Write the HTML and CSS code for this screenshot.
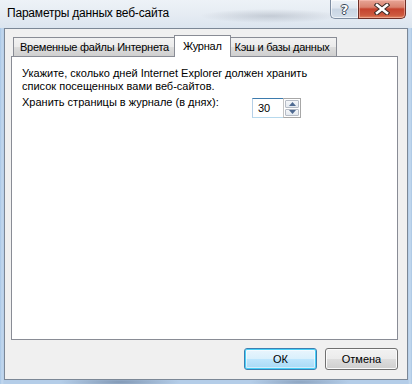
FILE: index.html
```html
<!DOCTYPE html>
<html lang="ru">
<head>
<meta charset="utf-8">
<title>Параметры данных веб-сайта</title>
<link rel="stylesheet" href="styles.css">
</head>
<body>
<div class="window">
  <div class="titlebar">
    <span class="title">Параметры данных веб-сайта</span>
    <div class="caption-buttons">
      <div class="cap help"><span class="qmark">?</span></div>
      <div class="cap close">
        <svg width="16" height="12" viewBox="0 0 16 12">
          <path d="M3 2 L13 10 M13 2 L3 10" stroke="#3b2a26" stroke-width="4.6" stroke-linecap="square" fill="none"/>
          <path d="M3 2 L13 10 M13 2 L3 10" stroke="#ffffff" stroke-width="2.6" stroke-linecap="square" fill="none"/>
        </svg>
      </div>
    </div>
  </div>
  <div class="client">
    <div class="tabs">
      <div class="tab">Временные файлы Интернета</div>
      <div class="tab active">Журнал</div>
      <div class="tab">Кэш и базы данных</div>
    </div>
    <div class="panel">
      <p class="desc">Укажите, сколько дней Internet Explorer должен хранить<br>список посещенных вами веб-сайтов.</p>
      <div class="row">
        <span class="label">Хранить страницы в журнале (в днях):</span>
        <div class="spin">
          <div class="field">30</div>
          <div class="updown">
            <div class="ud-btn"><svg width="7" height="4" viewBox="0 0 7 4"><path d="M0 4 L3.5 0 L7 4 Z" fill="#4f6a91"/></svg></div>
            <div class="ud-btn"><svg width="7" height="4" viewBox="0 0 7 4"><path d="M0 0 L3.5 4 L7 0 Z" fill="#4f6a91"/></svg></div>
          </div>
        </div>
      </div>
    </div>
    <div class="actions">
      <button class="btn default">ОК</button>
      <button class="btn">Отмена</button>
    </div>
  </div>
</div>
</body>
</html>
```
FILE: styles.css
```css
html, body {
  margin: 0;
  padding: 0;
}
body {
  width: 412px;
  height: 384px;
  overflow: hidden;
  font-family: "Liberation Sans", Arial, sans-serif;
  font-size: 11px;
  letter-spacing: -0.25px;
  color: #000;
}
.window {
  width: 412px;
  height: 384px;
  display: flex;
  flex-direction: column;
  background:
    radial-gradient(ellipse 60px 6px at 120px 382px, rgba(70,90,120,0.45), transparent),
    radial-gradient(ellipse 50px 5px at 300px 382px, rgba(70,90,120,0.35), transparent),
    linear-gradient(to right, #a7c6e6 0, #c3d8ee 2px, #b4cde8 4px, #b4cde8 408px, #c5daef 410px, #a9c6e4 412px);
}
.titlebar {
  height: 28px;
  flex: none;
  display: flex;
  justify-content: space-between;
  align-items: flex-start;
  padding: 0 6px 0 7px;
  background:
    radial-gradient(ellipse 70px 7px at 270px 16px, rgba(120,130,145,0.3), transparent),
    linear-gradient(to bottom, #edf2f7 0, #e6ecf3 14px, #dbe5ef 28px);
}
.title {
  margin-top: 6px;
  line-height: 15px;
  font-size: 12px;
  letter-spacing: -0.2px;
  color: #000;
}
.caption-buttons {
  display: flex;
  height: 19px;
}
.cap {
  height: 19px;
  display: flex;
  align-items: center;
  justify-content: center;
  box-sizing: border-box;
}
.help {
  width: 28px;
  border: 1px solid #7f8ea2;
  border-top: none;
  border-right: none;
  border-radius: 0 0 0 5px;
  background: linear-gradient(to bottom, #eef2f7 0, #dfe6ef 45%, #c9d5e3 50%, #d4dfeb 100%);
  box-shadow: inset 0 0 0 1px rgba(255,255,255,0.6);
}
.qmark {
  font-family: "DejaVu Sans", sans-serif;
  font-weight: bold;
  font-size: 13px;
  line-height: 13px;
  letter-spacing: 0;
  color: #fff;
  text-shadow: -1px 0 #3a4656, 1px 0 #3a4656, 0 -1px #3a4656, 0 1px #3a4656;
}
.close {
  width: 48px;
  border: 1px solid #6e2f27;
  border-top: none;
  border-radius: 0 0 5px 0;
  background: linear-gradient(to bottom, #e7a596 0, #d9826f 40%, #c5432e 50%, #cd5a3f 85%, #e08a63 100%);
  box-shadow: inset 0 0 0 1px rgba(255,200,190,0.5);
}
.client {
  flex: 1;
  display: flex;
  flex-direction: column;
  margin: 0 4px 4px 4px;
  background: #f0f0f0;
  border: 1px solid #7b8796;
}
.tabs {
  display: flex;
  align-items: flex-end;
  margin: 6px 0 0 8px;
  height: 21px;
  position: relative;
  z-index: 1;
}
.tab {
  height: 19px;
  box-sizing: border-box;
  padding: 0 6px;
  line-height: 18px;
  border: 1px solid #898c95;
  border-bottom: none;
  background: linear-gradient(to bottom, #f2f2f2 0, #ebebeb 50%, #dddddd 51%, #cfcfcf 100%);
  white-space: nowrap;
  margin-left: -1px;
}
.tab:first-child {
  margin-left: 0;
}
.tab.active {
  height: 22px;
  margin: 0 -2px -1px -2px;
  padding: 0 8px;
  line-height: 20px;
  background: #fff;
  position: relative;
  z-index: 2;
}
.panel {
  flex: 1;
  margin: 0 9px 0 6px;
  background: #fff;
  border: 1px solid #898c95;
  padding: 10px 10px 0 10px;
  letter-spacing: 0;
}
.desc {
  margin: 0;
  line-height: 13px;
}
.row {
  display: flex;
  align-items: flex-start;
  margin-top: 3px;
}
.label {
  width: 230px;
  line-height: 13px;
  flex: none;
}
.spin {
  display: flex;
  margin-top: 2px;
  height: 20px;
}
.field {
  width: 31px;
  box-sizing: border-box;
  height: 20px;
  padding-left: 5px;
  line-height: 18px;
  border: 1px solid #b5cfe7;
  border-top-color: #3d7bad;
  border-bottom-color: #b7d9ed;
  border-right: none;
  background: #fff;
}
.updown {
  width: 18px;
  height: 20px;
  box-sizing: border-box;
  border: 1px solid #a7a7a7;
  border-left-color: #c3c3c3;
  display: flex;
  flex-direction: column;
  padding: 1px;
  gap: 1px;
  background: #fff;
}
.ud-btn {
  flex: 1;
  border: 1px solid #b6bcc6;
  border-radius: 1px;
  background: linear-gradient(to bottom, #f4f6f9 0, #e4e9ef 100%);
  display: flex;
  align-items: center;
  justify-content: center;
}
.ud-btn svg {
  display: block;
}
.actions {
  flex: none;
  display: flex;
  justify-content: flex-end;
  gap: 8px;
  margin: 8px 9px 9px 0;
}
.btn {
  width: 73px;
  height: 22px;
  margin: 0;
  padding: 0;
  font-family: "Liberation Sans", Arial, sans-serif;
  font-size: 11px;
  letter-spacing: 0;
  color: #000;
  border: 1px solid #707070;
  border-radius: 3px;
  background: linear-gradient(to bottom, #f2f2f2 0, #ebebeb 50%, #dddddd 51%, #cfcfcf 100%);
  box-shadow: inset 0 0 0 1px #fbfbfb;
}
.btn.default {
  border-color: #3c7fb1;
  background: linear-gradient(to bottom, #eaf6fd 0, #d9f0fc 50%, #bee6fd 51%, #a7d9f5 100%);
  box-shadow: inset 0 0 0 1px #48d0f8, inset 0 0 0 2px rgba(255,255,255,0.5);
}
```
